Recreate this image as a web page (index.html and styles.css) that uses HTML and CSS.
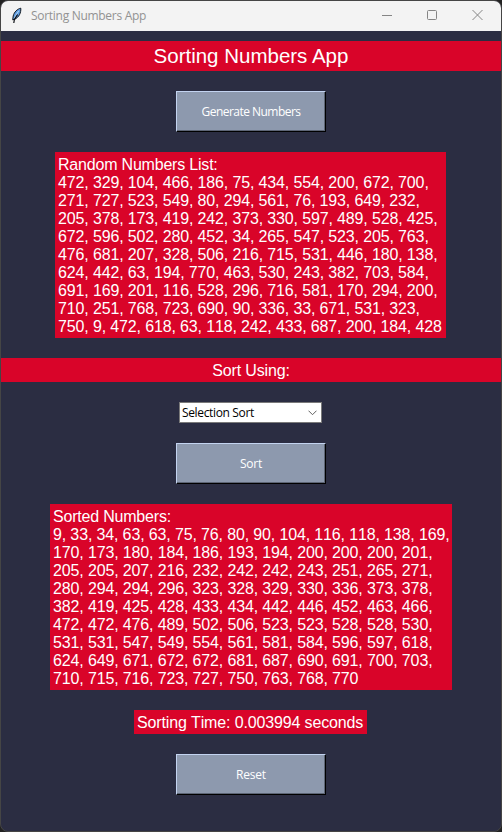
FILE: index.html
```html
<!DOCTYPE html>
<html lang="en">
<head>
<meta charset="utf-8">
<title>Sorting Numbers App</title>
<link rel="stylesheet" href="styles.css">
</head>
<body>
<div class="window">
  <header class="titlebar">
    <svg class="feather" width="12" height="18" viewBox="0 0 12 18"><path d="M10.8 1.2C7.5 1.8 4.1 5 3.2 9L2.7 12.8L4.9 12.2C9 10 11.1 6 10.8 1.2Z" fill="#5c9be0" stroke="#111820" stroke-width="1"/><path d="M8.8 3.8L5.7 8.5L4.3 11.5" fill="none" stroke="#b5d8f7" stroke-width="1"/><path d="M7.6 7.5L4.4 12.5L3.8 16" fill="none" stroke="#0a0d12" stroke-width="1.2"/></svg>
    <span class="caption">Sorting Numbers App</span>
    <div class="controls">
      <svg width="10" height="10" viewBox="0 0 10 10"><path d="M0 5.5H10"/></svg>
      <svg width="10" height="10" viewBox="0 0 10 10"><rect x=".5" y=".5" width="9" height="9" rx="1"/></svg>
      <svg width="11" height="10" viewBox="0 0 11 10"><path d="M.5 0L10.5 10M10.5 0L.5 10"/></svg>
    </div>
  </header>
  <main class="content">
    <h1 class="heading">Sorting Numbers App</h1>
    <button class="btn generate">Generate Numbers</button>
    <div class="label random"><span class="list-title">Random Numbers List:</span>
472, 329, 104, 466, 186, 75, 434, 554, 200, 672, 700,
271, 727, 523, 549, 80, 294, 561, 76, 193, 649, 232,
205, 378, 173, 419, 242, 373, 330, 597, 489, 528, 425,
672, 596, 502, 280, 452, 34, 265, 547, 523, 205, 763,
476, 681, 207, 328, 506, 216, 715, 531, 446, 180, 138,
624, 442, 63, 194, 770, 463, 530, 243, 382, 703, 584,
691, 169, 201, 116, 528, 296, 716, 581, 170, 294, 200,
710, 251, 768, 723, 690, 90, 336, 33, 671, 531, 323,
750, 9, 472, 618, 63, 118, 242, 433, 687, 200, 184, 428</div>
    <div class="label using">Sort Using:</div>
    <div class="combo"><span>Selection Sort</span><svg width="9" height="6" viewBox="0 0 9 6"><path d="M.5 .7L4.5 4.7L8.5 .7"/></svg></div>
    <button class="btn">Sort</button>
    <div class="label sorted"><span class="list-title">Sorted Numbers:</span>
9, 33, 34, 63, 63, 75, 76, 80, 90, 104, 116, 118, 138, 169,
170, 173, 180, 184, 186, 193, 194, 200, 200, 200, 201,
205, 205, 207, 216, 232, 242, 242, 243, 251, 265, 271,
280, 294, 294, 296, 323, 328, 329, 330, 336, 373, 378,
382, 419, 425, 428, 433, 434, 442, 446, 452, 463, 466,
472, 472, 476, 489, 502, 506, 523, 523, 528, 528, 530,
531, 531, 547, 549, 554, 561, 581, 584, 596, 597, 618,
624, 649, 671, 672, 672, 681, 687, 690, 691, 700, 703,
710, 715, 716, 723, 727, 750, 763, 768, 770</div>
    <div class="label time">Sorting Time: 0.003994 seconds</div>
    <button class="btn">Reset</button>
  </main>
</div>
</body>
</html>
```
FILE: styles.css
```css
* { box-sizing: border-box; }
body {
  margin: 0;
  background: #222;
  font-family: "Liberation Sans", Arial, sans-serif;
}
.window {
  width: 502px;
  height: 832px;
  border: 1px solid #454545;
  border-radius: 8px;
  background: #2b2d42;
  overflow: hidden;
}
.titlebar {
  height: 30px;
  display: flex;
  align-items: center;
  background: #f3f3f3;
  padding: 0 18px 0 9px;
}
.feather { display: block; margin-right: 9px; }
.caption {
  font: 12px/16px "Open Sans", "Noto Sans", sans-serif;
  letter-spacing: -0.29px;
  color: #929292;
  white-space: nowrap;
}
.controls {
  margin-left: auto;
  display: flex;
  gap: 35px;
  margin-bottom: 2px;
}
.controls svg {
  display: block;
  fill: none;
  stroke: #858585;
  stroke-width: 1;
}
.content {
  display: flex;
  flex-direction: column;
  align-items: center;
  gap: 20px;
  padding-top: 10px;
}
.heading {
  width: 100%;
  height: 30px;
  margin: 0;
  background: #d90429;
  color: #fff;
  font-size: 20.5px;
  line-height: 30px;
  font-weight: 400;
  text-align: center;
}
.btn {
  width: 150px;
  height: 41px;
  margin: 0;
  padding: 0;
  border: 1px solid;
  border-color: #c3d3f0 #000 #000 #c3d3f0;
  box-shadow: inset -1px -1px #5d6575;
  background: #8d99ae;
  color: #fff;
  font: 12px/16px "Open Sans", "Noto Sans", sans-serif;
  letter-spacing: -0.2px;
}
.generate { letter-spacing: -0.53px; }
.label {
  padding: 4px 3px 2px;
  background: #d90429;
  color: #fff;
  font-size: 16px;
  line-height: 18px;
  letter-spacing: -0.14px;
  font-kerning: none;
  white-space: pre;
}
.list-title { letter-spacing: -0.2px; }
.random { width: 391px; height: 186px; margin-right: 1px; }
.using { width: 100%; height: 24px; text-align: center; }
.sorted { width: 402px; height: 186px; }
.time { width: 233px; height: 24px; margin-right: 1px; }
.combo {
  width: 143px;
  height: 21px;
  margin-right: 1px;
  padding: 0 4px 0 2px;
  display: flex;
  align-items: center;
  justify-content: space-between;
  border: 1px solid #7a7a7a;
  background: #fff;
  color: #000;
  font: 12px/16px "Open Sans", "Noto Sans", sans-serif;
  letter-spacing: -0.35px;
}
.combo svg { fill: none; stroke: #606060; stroke-width: 1; }
```
